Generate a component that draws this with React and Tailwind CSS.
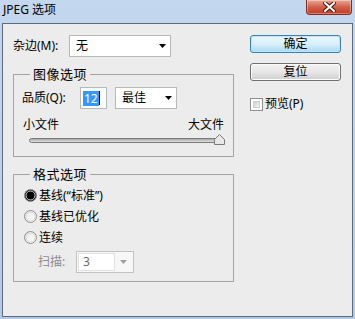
import React from "react";

function Arrow({ color = "#000" }) {
  return (
    <svg width="7" height="4" viewBox="0 0 7 4">
      <path d="M0 0H7L3.5 4Z" fill={color} />
    </svg>
  );
}

function Radio({ checked, label }) {
  return (
    <div className="flex h-[21px] items-center">
      <svg width="13" height="13" viewBox="0 0 13 13">
        <defs>
          <linearGradient id={"rg" + label} x1="0" y1="0" x2="1" y2="1">
            <stop offset="0" stopColor="#e6e6e6" />
            <stop offset="1" stopColor="#ffffff" />
          </linearGradient>
          <radialGradient id={"rd" + label} cx="0.4" cy="0.35" r="0.7">
            <stop offset="0" stopColor="#9fd3f7" />
            <stop offset="0.5" stopColor="#2a7fd0" />
            <stop offset="1" stopColor="#0d3f82" />
          </radialGradient>
        </defs>
        <circle cx="6.5" cy="6.5" r="6" fill={`url(#rg${label})`} stroke="#8f8f8f" />
        <circle cx="6.5" cy="6.5" r="4.5" fill="none" stroke="#d6d6d6" />
        {checked && <circle cx="6.5" cy="6.5" r="3" fill={`url(#rd${label})`} />}
      </svg>
      <span className="ml-[2px] text-[12px] leading-[16px] text-black">{label}</span>
    </div>
  );
}

export default function App() {
  return (
    <div className="w-[355px] h-[319px] overflow-hidden bg-gradient-to-b from-[#c3d7ef] via-[#bcd1ea] to-[#b3c9e6] font-['Noto_Sans','Noto_Sans_CJK_SC',sans-serif] text-black">
      {/* title bar */}
      <div className="flex h-[23px] items-start">
        <div className="pl-[3px] pt-[1px] text-[12px] leading-[18px]">JPEG 选项</div>
        <div className="ml-auto mr-[3px] flex h-[15px] w-[46px] items-center justify-center rounded-b-[4px] border border-t-0 border-[#7f2d1f] bg-gradient-to-b from-[#e9a897] via-[#d0604a] to-[#c03a20] shadow-[inset_0_0_0_1px_rgba(255,255,255,0.35)]">
          <svg width="13" height="10" viewBox="0 0 13 10">
            <path d="M2 1L11 9M11 1L2 9" stroke="#4a1a10" strokeWidth="4" strokeLinecap="square" />
            <path d="M2 1L11 9M11 1L2 9" stroke="#ffffff" strokeWidth="2" strokeLinecap="square" />
          </svg>
        </div>
      </div>

      {/* client */}
      <div className="ml-[2px] flex h-[294px] w-[351px] border border-[#5d6b7b] bg-[#ececec] pl-[10px] pt-[11px]">
        {/* left column */}
        <div className="flex w-[221px] flex-col">
          <div className="flex items-center">
            <span className="w-[56px] text-[12px] leading-[16px]">杂边(M):</span>
            <div className="flex h-[22px] w-[102px] items-center justify-between border border-[#b8b8b8] bg-white pl-[6px] pr-[4px]">
              <span className="text-[12px] leading-[16px]">无</span>
              <Arrow />
            </div>
          </div>

          <fieldset className="mt-[9px] border border-[#a3a3a3]">
            <legend className="ml-[16px] px-[3px] text-[13px] leading-[16px] tracking-[0.5px]">图像选项</legend>
            <div className="flex flex-col px-[8px] pb-[10px] pt-[5px]">
              <div className="flex items-center">
                <span className="w-[58px] text-[12px] leading-[16px]">品质(Q):</span>
                <div className="flex h-[22px] w-[27px] items-center border border-[#b8b8b8] bg-white pl-[2px]">
                  <span className="bg-[#3399ff] px-[1px] text-[12px] leading-[15px] text-white">12</span>
                  <span className="h-[14px] w-[1px] bg-black" />
                </div>
                <div className="ml-[8px] flex h-[22px] w-[62px] items-center justify-between border border-[#b8b8b8] bg-white pl-[6px] pr-[4px]">
                  <span className="text-[12px] leading-[16px]">最佳</span>
                  <Arrow />
                </div>
              </div>
              <div className="mt-[8px] flex justify-between px-[1px] text-[12px] leading-[16px]">
                <span>小文件</span>
                <span>大文件</span>
              </div>
              <div className="relative mt-[1px] h-[12px] pl-[7px] pr-[2px]">
                <div className="mt-[4px] h-[5px] rounded-full border border-[#7c7c7c] bg-gradient-to-b from-[#a9a9a9] to-[#e2e2e2]" />
                <svg className="absolute right-[0px] top-0" width="11" height="11" viewBox="0 0 11 11">
                  <path d="M0.5 10.5V5.5L5.5 0.5L10.5 5.5V10.5Z" fill="#e8e8e8" stroke="#7a7a7a" />
                </svg>
              </div>
            </div>
          </fieldset>

          <fieldset className="mt-[9px] border border-[#a3a3a3]">
            <legend className="ml-[16px] px-[3px] text-[13px] leading-[16px] tracking-[0.5px]">格式选项</legend>
            <div className="flex flex-col pl-[10px] pb-[8px] pt-[3px]">
              <Radio checked label="基线(“标准”)" />
              <Radio label="基线已优化" />
              <Radio label="连续" />
              <div className="mt-[3px] flex items-center pl-[14px]">
                <span className="w-[38px] text-[12px] leading-[16px] text-[#8d8d8d]">扫描:</span>
                <div className="flex h-[22px] w-[58px] items-stretch border border-[#c2c2c2] bg-[#f7f7f7] p-[1px]">
                  <div className="flex w-[37px] items-center border border-[#e2e2e2] bg-white pl-[4px] text-[12px] leading-[16px] text-[#6a6a6a]">3</div>
                  <div className="flex flex-1 items-center justify-center">
                    <Arrow color="#a0a0a0" />
                  </div>
                </div>
              </div>
            </div>
          </fieldset>
        </div>

        {/* right column */}
        <div className="ml-[16px] flex w-[91px] flex-col">
          <div className="flex h-[18px] items-center justify-center rounded-[3px] border border-[#3c7fb1] bg-gradient-to-b from-[#eaf6fd] via-[#d9f0fc] to-[#a7d9f5] shadow-[inset_0_0_0_1px_#bfe5fa] text-[12px] leading-[16px]">
            确定
          </div>
          <div className="mt-[10px] flex h-[18px] items-center justify-center rounded-[3px] border border-[#707070] bg-gradient-to-b from-[#f2f2f2] via-[#e6e6e6] to-[#cfcfcf] shadow-[inset_0_0_0_1px_#fcfcfc] text-[12px] leading-[16px]">
            复位
          </div>
          <div className="mt-[15px] flex items-center">
            <div className="h-[13px] w-[13px] border border-[#8e8f8f] bg-white p-[2px]">
              <div className="h-full w-full border border-[#d0d0d0] bg-gradient-to-br from-[#cbcfd5] to-[#f6f6f6]" />
            </div>
            <span className="ml-[2px] text-[12px] leading-[16px]">预览(P)</span>
          </div>
        </div>
      </div>
    </div>
  );
}
